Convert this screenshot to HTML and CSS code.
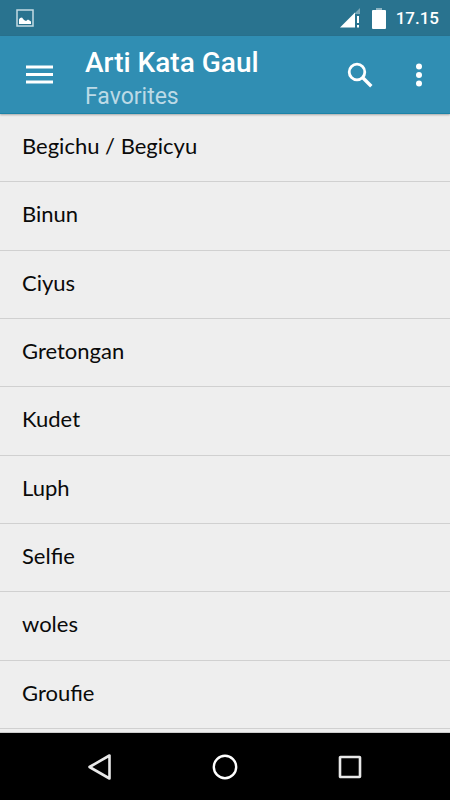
FILE: index.html
```html
<!DOCTYPE html>
<html lang="id">
  <head>
    <meta charset="UTF-8" />
    <meta name="viewport" content="width=device-width, initial-scale=1.0" />
    <title>Arti Kata Gaul</title>
    <link rel="stylesheet" href="styles.css">
  </head>
  <body>
    <!-- Status bar -->
    <div class="status-bar">
      <svg class="icon-picture" width="18" height="18" viewBox="0 0 18 18">
        <rect x="1" y="1" width="16" height="16" fill="none" stroke="#c3dbe4" stroke-width="1.5" />
        <path d="M3 15V10.5L4 9L6 8.5L8 11L10 12L12 10.5L15 12.5V15Z" fill="#fff" />
      </svg>
      <div class="status-right">
        <svg width="20" height="20" viewBox="0 0 20 20">
          <path d="M20 0V6H14Z" fill="#79a7b8" />
          <path d="M0 19.5L15 4.5V19.5Z" fill="#fff" />
          <path d="M17 8H19V15H17ZM17 17H19V19.5H17Z" fill="#fff" />
        </svg>
        <svg class="icon-battery" width="14" height="21" viewBox="0 0 14 21">
          <rect x="4" y="0" width="6" height="3" fill="#8fb5c3" />
          <rect x="0" y="2" width="14" height="19" rx="1" fill="#fff" />
        </svg>
        <span>17.15</span>
      </div>
    </div>

    <!-- Toolbar -->
    <header class="toolbar">
      <button class="menu-btn" aria-label="Menu">
        <svg width="28" height="20" viewBox="0 0 28 20">
          <path d="M1 2H28M1 9.5H28M1 17H28" stroke="#fff" stroke-width="3" />
        </svg>
      </button>
      <div class="titles">
        <h1>Arti Kata Gaul</h1>
        <p>Favorites</p>
      </div>
      <button class="search-btn" aria-label="Cari">
        <svg width="26" height="26" viewBox="0 0 26 26">
          <circle cx="10" cy="10" r="7.8" fill="none" stroke="#fff" stroke-width="2.8" />
          <path d="M15.3 15.3L24.3 24.3" stroke="#fff" stroke-width="3.4" />
        </svg>
      </button>
      <button class="more-btn" aria-label="Opsi lainnya">
        <svg width="8" height="24" viewBox="0 0 8 24">
          <circle cx="4" cy="3.5" r="3" fill="#fff" />
          <circle cx="4" cy="12" r="3" fill="#fff" />
          <circle cx="4" cy="20.5" r="3" fill="#fff" />
        </svg>
      </button>
    </header>

    <!-- Daftar kata favorit -->
    <ul class="word-list">
      <li><a href="#">Begichu / Begicyu</a></li>
      <li><a href="#">Binun</a></li>
      <li><a href="#">Ciyus</a></li>
      <li><a href="#">Gretongan</a></li>
      <li><a href="#">Kudet</a></li>
      <li><a href="#">Luph</a></li>
      <li><a href="#">Selfie</a></li>
      <li><a href="#">woles</a></li>
      <li><a href="#">Groufie</a></li>
    </ul>

    <!-- Navigasi bawah -->
    <nav class="nav-bar">
      <button aria-label="Kembali">
        <svg width="26" height="28" viewBox="0 0 26 28">
          <path d="M2.5 14L22.5 2.5V25.5Z" fill="none" stroke="#e8e8e8" stroke-width="2.6" stroke-linejoin="round" />
        </svg>
      </button>
      <button aria-label="Beranda">
        <svg width="26" height="28" viewBox="0 0 26 28">
          <circle cx="13" cy="14" r="11.2" fill="none" stroke="#fff" stroke-width="2.4" />
        </svg>
      </button>
      <button aria-label="Aplikasi terbaru">
        <svg width="26" height="28" viewBox="0 0 26 28">
          <rect x="3" y="4" width="20" height="20" rx="0.5" fill="none" stroke="#e8e8e8" stroke-width="2.6" stroke-linejoin="round" />
        </svg>
      </button>
    </nav>
  </body>
</html>
```
FILE: styles.css
```css
* {
  margin: 0;
  padding: 0;
  box-sizing: border-box;
}

body {
  font-family: Roboto, sans-serif;
  background-color: #eee;
  min-height: 100vh;
  display: flex;
  flex-direction: column;
}

svg {
  display: block;
}

button {
  background: none;
  border: none;
  cursor: pointer;
}

.status-bar {
  height: 36px;
  padding: 0 11px 0 16px;
  background-color: #29738f;
  display: flex;
  justify-content: space-between;
  align-items: center;
}

.status-right {
  display: flex;
  align-items: center;
  gap: 10px;
  color: #fff;
  font-size: 17px;
  font-weight: 500;
}

.status-right .icon-battery {
  margin-left: 2px;
}

.toolbar {
  height: 78px;
  padding: 0 27px 0 25px;
  background-color: #308eb3;
  border-bottom: 1px solid #1c83a8;
  box-shadow: 0 1px 2px rgba(0, 0, 0, 0.3);
  display: flex;
  align-items: center;
}

.titles {
  flex: 1;
  margin-left: 32px;
  padding-top: 8px;
}

.titles h1 {
  color: #fff;
  font-size: 28px;
  font-weight: 500;
  line-height: 36px;
}

.titles p {
  color: #bcdae6;
  font-size: 23px;
  line-height: 32px;
}

.more-btn {
  margin-left: 42px;
}

.word-list {
  flex: 1;
  padding-bottom: 3px;
  list-style: none;
  display: grid;
  grid-auto-rows: 1fr;
  border-bottom: 1px solid #ccc;
}

.word-list li {
  border-bottom: 1px solid #d0d0d0;
}

.word-list a {
  height: 100%;
  padding: 0 22px 4px;
  display: flex;
  align-items: center;
  color: #0a0a0a;
  font-family: Lato, sans-serif;
  font-size: 22px;
  text-decoration: none;
}

.nav-bar {
  height: 67px;
  padding: 0 37px;
  background-color: #000;
  display: flex;
  align-items: center;
}

.nav-bar button {
  flex: 1;
  display: flex;
  justify-content: center;
}
```
